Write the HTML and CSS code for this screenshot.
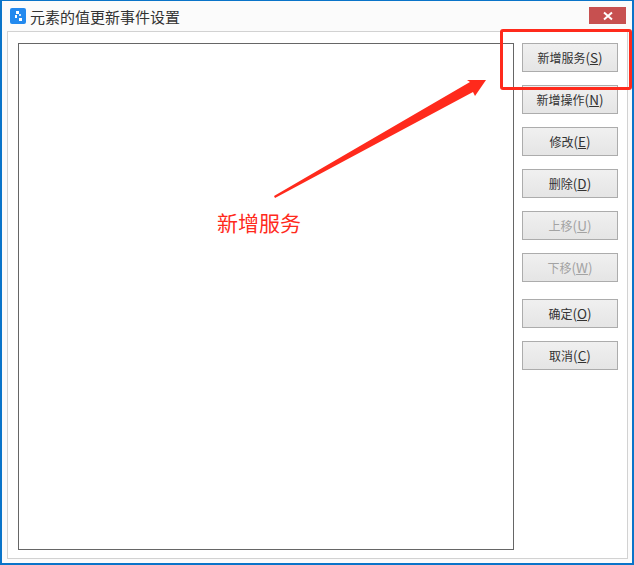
FILE: index.html
```html
<!DOCTYPE html>
<html lang="zh-CN">
<head>
<meta charset="UTF-8" />
<title>元素的值更新事件设置</title>
<link rel="stylesheet" href="styles.css">
</head>
<body>
  <div class="window">
    <div class="titlebar">
      <svg class="app-icon" width="16" height="16" viewBox="0 0 16 16">
        <rect width="16" height="16" rx="2" fill="#2289ee" />
        <rect x="6" y="3" width="3" height="3" fill="#fff" />
        <rect x="5" y="7" width="2" height="3" fill="#fff" />
        <rect x="9" y="6" width="2" height="2" fill="#cfe6ff" />
        <rect x="9" y="10" width="3" height="3" fill="#fff" />
      </svg>
      <span class="title">元素的值更新事件设置</span>
      <button class="close-button">
        <svg width="10" height="10" viewBox="0 0 10 10">
          <path d="M1 1.5 L9 8.5 M9 1.5 L1 8.5" stroke="#fff" stroke-width="2" />
        </svg>
      </button>
    </div>
    <div class="panel">
      <div class="listbox"></div>
      <div class="actions">
        <div class="button-group">
          <button class="btn">新增服务<span class="key">(<u>S</u>)</span></button>
          <button class="btn">新增操作<span class="key">(<u>N</u>)</span></button>
          <button class="btn">修改<span class="key">(<u>E</u>)</span></button>
          <button class="btn">删除<span class="key">(<u>D</u>)</span></button>
          <button class="btn disabled">上移<span class="key">(<u>U</u>)</span></button>
          <button class="btn disabled">下移<span class="key">(<u>W</u>)</span></button>
        </div>
        <div class="button-group">
          <button class="btn">确定<span class="key">(<u>O</u>)</span></button>
          <button class="btn">取消<span class="key">(<u>C</u>)</span></button>
        </div>
      </div>
    </div>
  </div>

  <!-- red annotation drawn over the dialog -->
  <div class="mark-box"></div>
  <svg class="mark-arrow" width="634" height="565" viewBox="0 0 634 565">
    <polygon points="274,196 470,82 467,80 486,80 475,96 473,92 275,198" fill="#ff2a1c" />
  </svg>
  <div class="mark-label">新增服务</div>
</body>
</html>
```

FILE: styles.css
```css
html, body {
  margin: 0;
  padding: 0;
}
body {
  width: 634px;
  height: 565px;
  overflow: hidden;
  position: relative;
  font-family: "Noto Sans CJK SC", "Liberation Sans", sans-serif;
}
.window {
  box-sizing: border-box;
  width: 634px;
  height: 565px;
  display: flex;
  flex-direction: column;
  background-color: #fbfbfb;
  border: 2px solid #0a74c9;
  border-top-width: 1px;
}
.titlebar {
  height: 30px;
  display: flex;
  align-items: center;
  padding-left: 8px;
  padding-right: 6px;
}
.app-icon {
  margin-top: -1px;
}
.title {
  margin-left: 4px;
  font-size: 15px;
  color: #333;
}
.close-button {
  margin-left: auto;
  margin-top: -1px;
  width: 37px;
  height: 17px;
  padding: 0;
  border: none;
  background-color: #c75050;
  display: flex;
  align-items: center;
  justify-content: center;
}
.panel {
  box-sizing: border-box;
  width: 621px;
  height: 528px;
  margin-left: 5px;
  border: 1px solid #d2d2d2;
  background-color: #fff;
  display: flex;
  padding: 11px 0 0 10px;
}
.listbox {
  box-sizing: border-box;
  width: 496px;
  height: 507px;
  border: 1px solid #666;
}
.actions {
  margin-left: 8px;
  display: flex;
  flex-direction: column;
  gap: 17px;
}
.button-group {
  display: flex;
  flex-direction: column;
  gap: 13px;
}
.btn {
  box-sizing: border-box;
  width: 96px;
  height: 29px;
  padding: 0 0 2px;
  border: 1px solid #acacac;
  background: linear-gradient(#f0f0f0, #e5e5e5);
  color: #333;
  font-family: "Noto Sans CJK SC", "Liberation Sans", sans-serif;
  font-size: 12px;
}
.btn.disabled {
  color: #a3a3a3;
}
.key {
  font-size: 13.5px;
}
.mark-box {
  position: absolute;
  left: 500px;
  top: 29px;
  width: 126px;
  height: 55px;
  border: 3px solid #ff2a1c;
  border-radius: 3px;
}
.mark-arrow {
  position: absolute;
  left: 0;
  top: 0;
}
.mark-label {
  position: absolute;
  left: 217px;
  top: 207px;
  font-size: 21px;
  line-height: 30px;
  color: #ff2a1c;
}
```
